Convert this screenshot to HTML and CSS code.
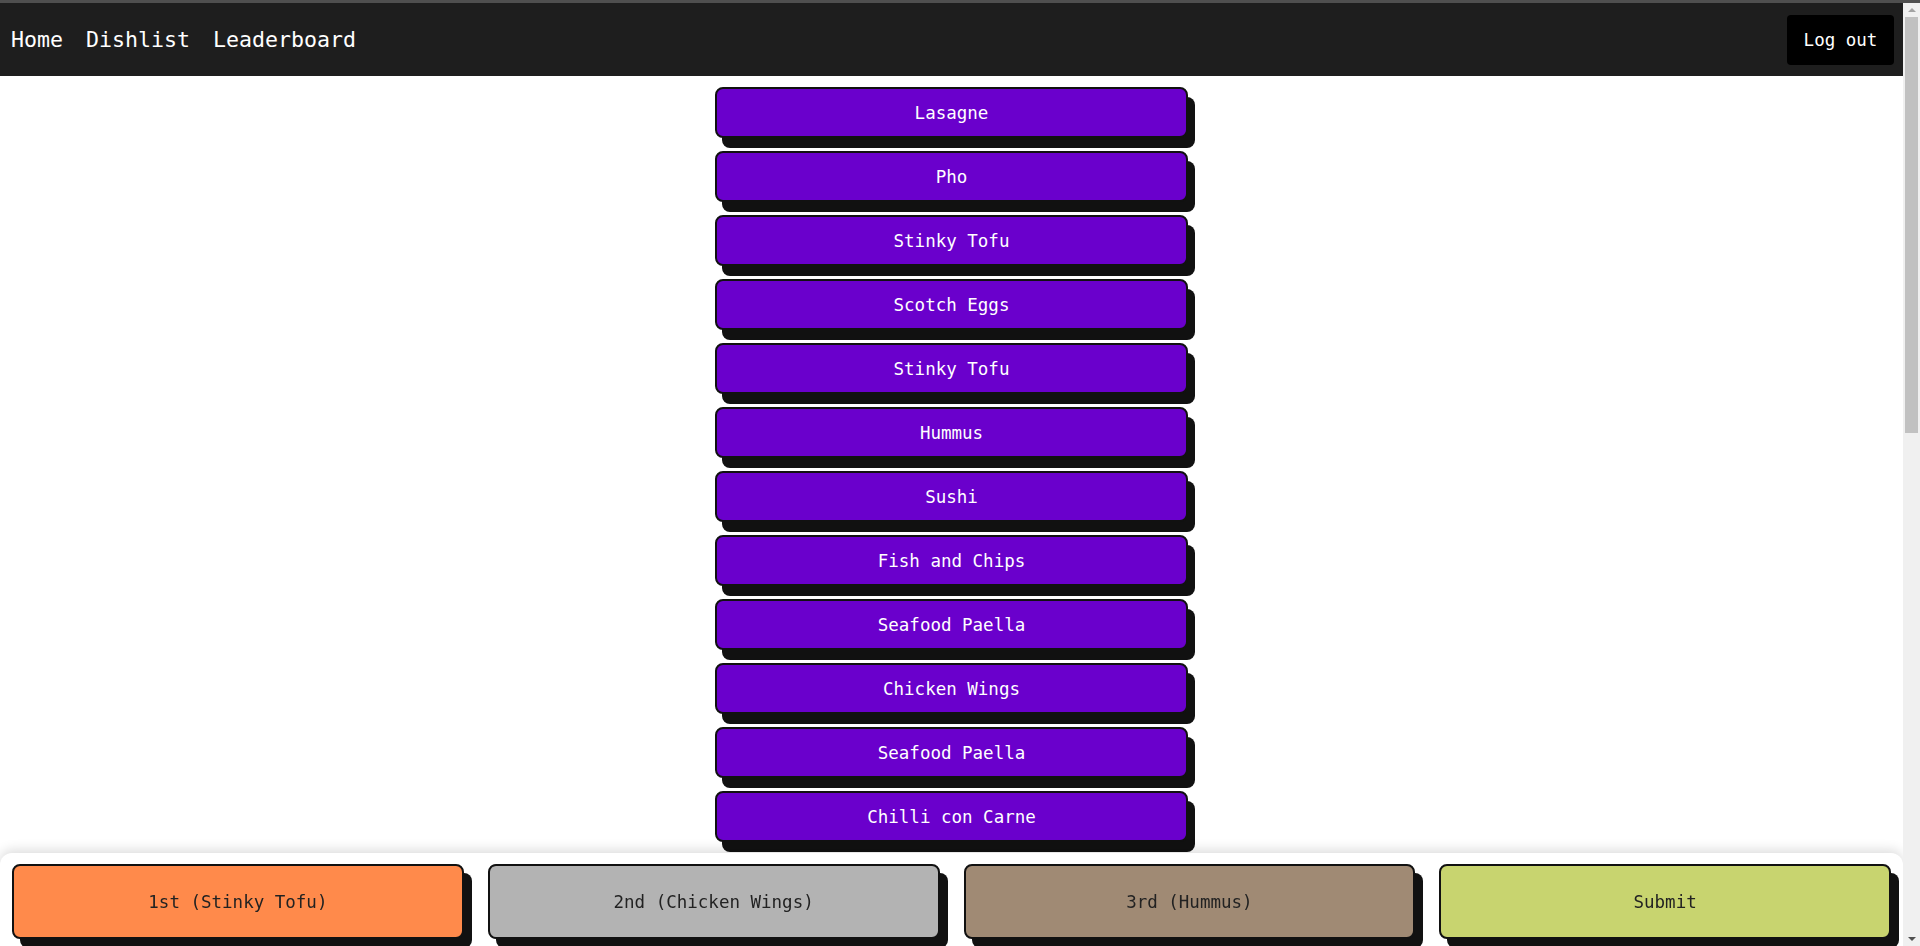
FILE: index.html
```html
<!DOCTYPE html>
<html lang="en">
<head>
<meta charset="utf-8">
<title>Dishlist</title>
<link rel="stylesheet" href="styles.css">
</head>
<body>
<div class="page">
  <header class="topbar">
    <nav class="nav">
      <a class="nav-link" href="#">Home</a>
      <a class="nav-link" href="#">Dishlist</a>
      <a class="nav-link" href="#">Leaderboard</a>
    </nav>
    <button class="logout">Log out</button>
  </header>
  <main class="dishes">
    <button class="dish">Lasagne</button>
    <button class="dish">Pho</button>
    <button class="dish">Stinky Tofu</button>
    <button class="dish">Scotch Eggs</button>
    <button class="dish">Stinky Tofu</button>
    <button class="dish">Hummus</button>
    <button class="dish">Sushi</button>
    <button class="dish">Fish and Chips</button>
    <button class="dish">Seafood Paella</button>
    <button class="dish">Chicken Wings</button>
    <button class="dish">Seafood Paella</button>
    <button class="dish">Chilli con Carne</button>
    <button class="dish">Pad Thai</button>
    <button class="dish">Ramen</button>
  </main>
  <footer class="ranking">
    <button class="rank rank-first">1st (Stinky Tofu)</button>
    <button class="rank rank-second">2nd (Chicken Wings)</button>
    <button class="rank rank-third">3rd (Hummus)</button>
    <button class="rank rank-submit">Submit</button>
  </footer>
</div>
<div class="scrollbar" aria-hidden="true">
  <div class="scroll-arrow scroll-up"></div>
  <div class="scroll-track"><div class="scroll-thumb"></div></div>
  <div class="scroll-arrow scroll-down"></div>
</div>
</body>
</html>
```
FILE: styles.css
```css
* {
  box-sizing: border-box;
}

html,
body {
  margin: 0;
}

body {
  font-family: "DejaVu Sans Mono", "Liberation Mono", monospace;
  background: #ffffff;
  border-top: 3px solid #4f4f4f;
}

.page {
  margin-right: 17px;
}

.topbar {
  display: flex;
  align-items: center;
  justify-content: space-between;
  height: 73px;
  background: #1e1e1e;
  padding: 0 9px 0 11px;
}

.nav {
  display: flex;
  gap: 23px;
}

.nav-link {
  color: #ffffff;
  text-decoration: none;
  font-size: 21.6px;
}

.logout {
  width: 107px;
  height: 50px;
  border: none;
  border-radius: 4px;
  background: #000000;
  color: #ffffff;
  font-family: inherit;
  font-size: 17.5px;
}

.dishes {
  display: flex;
  flex-direction: column;
  align-items: center;
  gap: 13px;
  padding: 11px 0 130px;
}

.dish {
  width: 473px;
  height: 51px;
  border: 2px solid #111111;
  border-radius: 8px;
  background: #6a00cc;
  color: #ffffff;
  font-family: inherit;
  font-size: 17.5px;
  box-shadow: 7px 10px 0 #111111;
}

.ranking {
  position: fixed;
  left: 0;
  right: 17px;
  bottom: 0;
  display: flex;
  gap: 24px;
  height: 93px;
  padding: 11px 12px 7px;
  background: #ffffff;
  border-radius: 12px 12px 0 0;
  box-shadow: 0 -3px 12px rgba(0, 0, 0, 0.14);
}

.rank {
  flex: 1;
  height: 75px;
  border: 2px solid #111111;
  border-radius: 8px;
  color: #222222;
  font-family: inherit;
  font-size: 17.5px;
  box-shadow: 8px 9px 0 #111111;
}

.rank-first {
  background: #ff8a4b;
}

.rank-second {
  background: #b3b3b3;
}

.rank-third {
  background: #a08a74;
}

.rank-submit {
  background: #c8d46f;
}

/* window scrollbar */
.scrollbar {
  position: fixed;
  top: 3px;
  right: 0;
  bottom: 0;
  width: 17px;
  display: flex;
  flex-direction: column;
  background: #f0f0f0;
}

.scroll-arrow {
  height: 14px;
  display: flex;
  align-items: center;
  justify-content: center;
}

.scroll-up::before,
.scroll-down::before {
  content: "";
  width: 0;
  height: 0;
  border-left: 4px solid transparent;
  border-right: 4px solid transparent;
}

.scroll-up::before {
  border-bottom: 4px solid #a3a3a3;
}

.scroll-down::before {
  border-top: 4px solid #505050;
}

.scroll-track {
  flex: 1;
  padding: 0 2px;
}

.scroll-thumb {
  height: 416px;
  background: #c1c1c1;
}
```
